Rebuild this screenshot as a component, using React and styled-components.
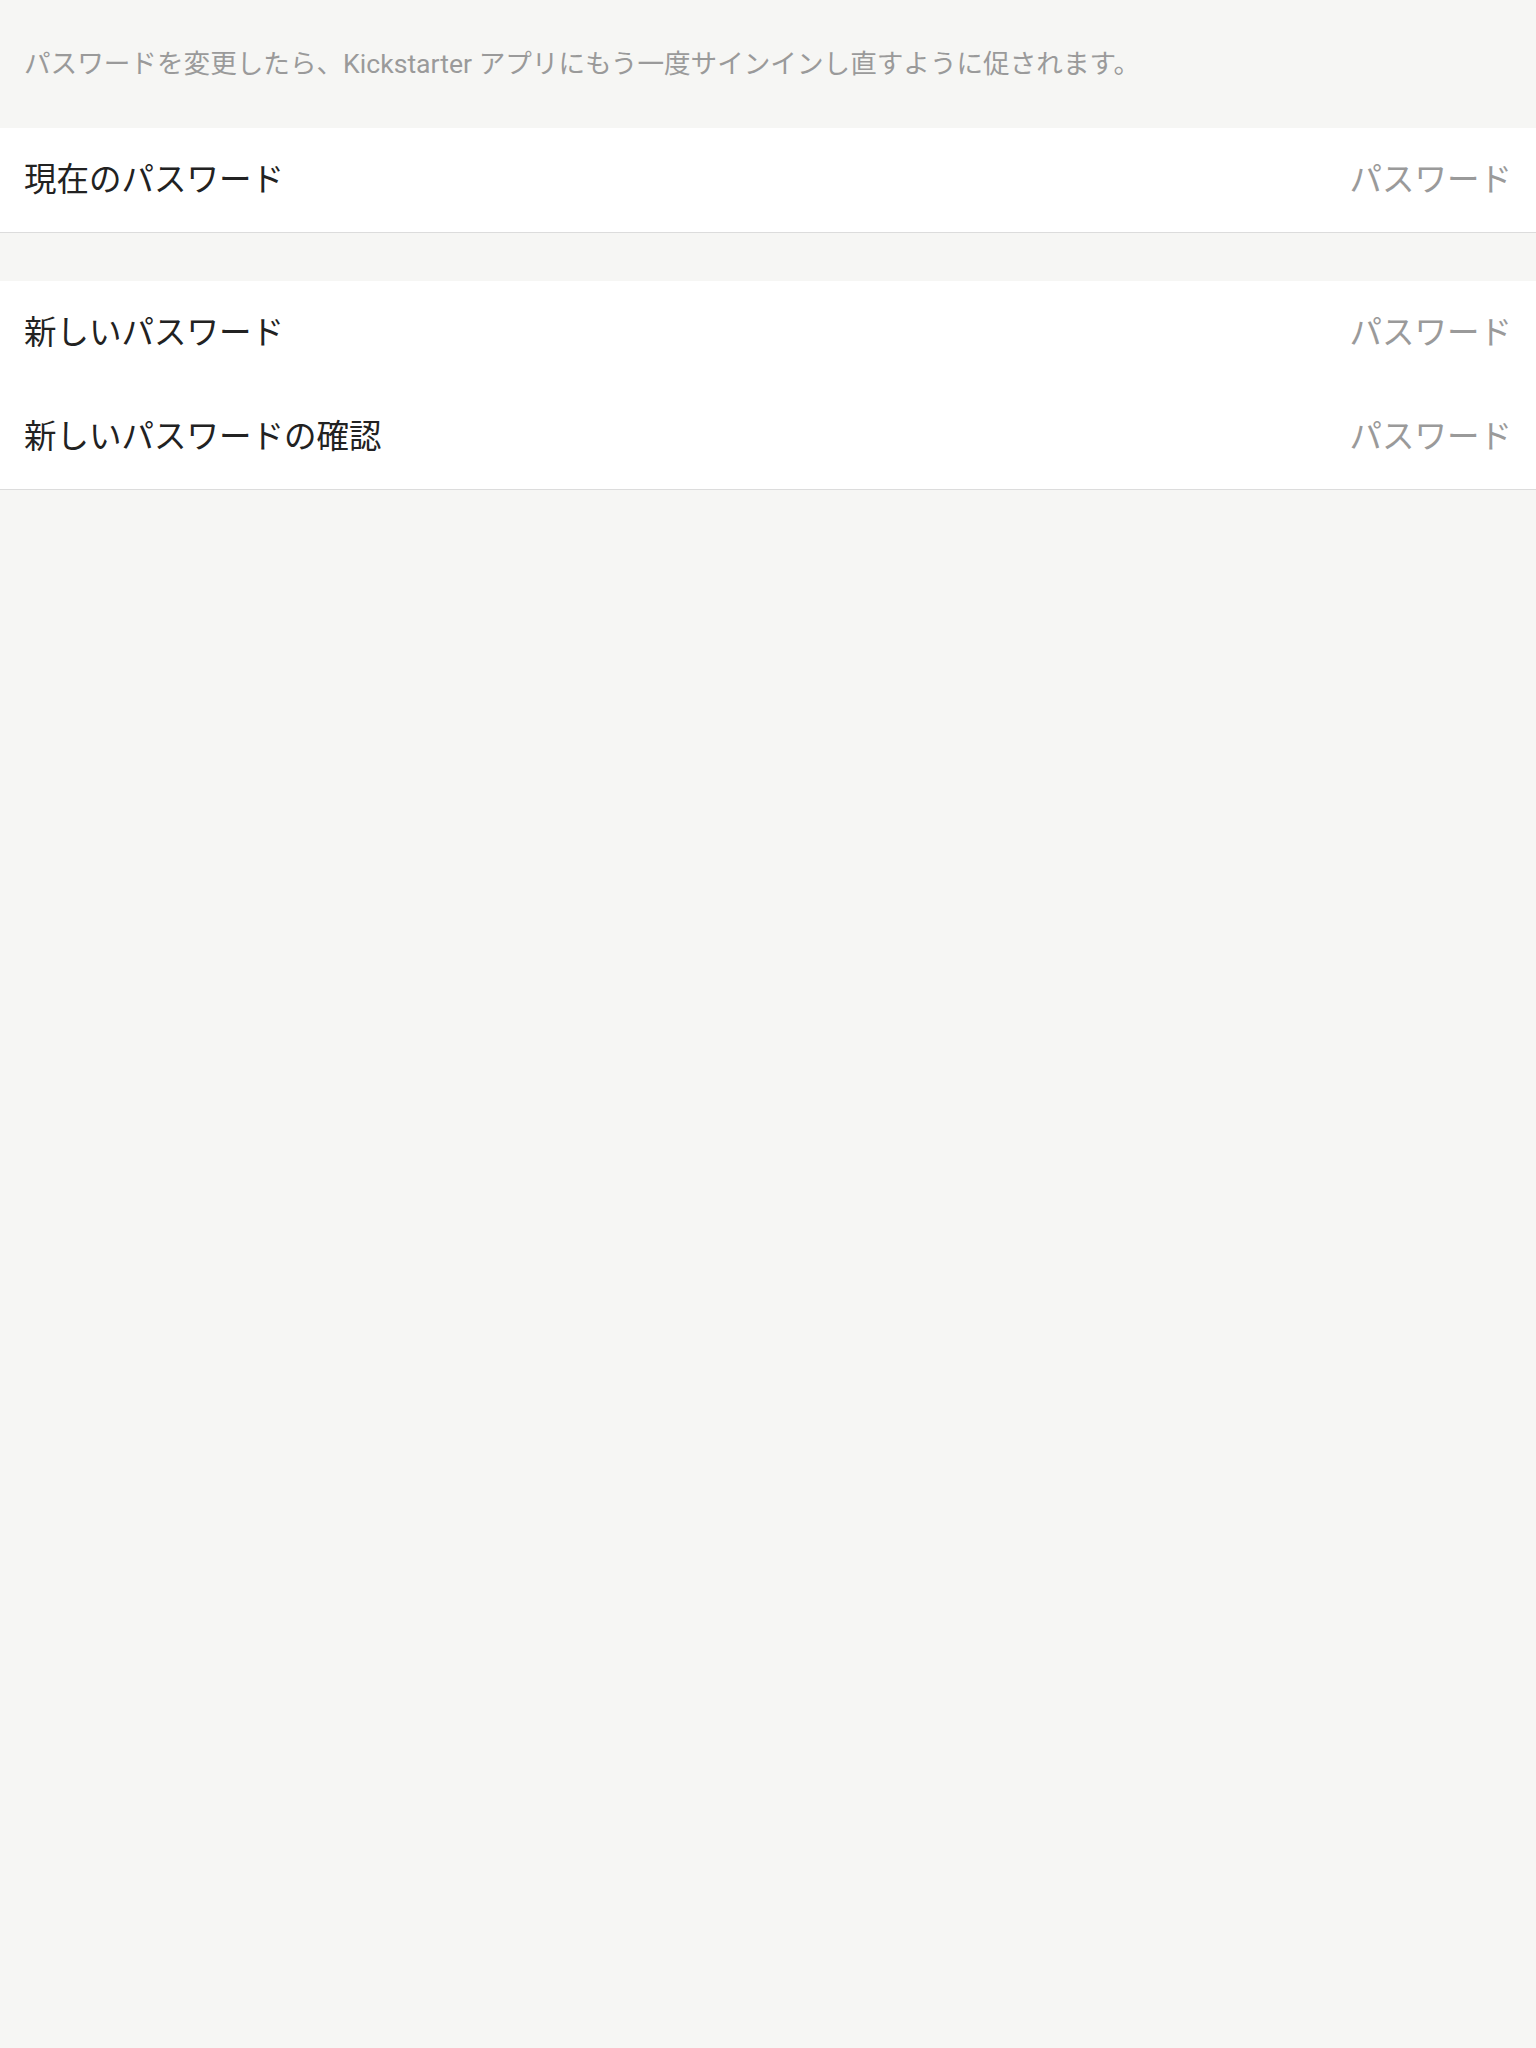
import React from "react";
import styled, {createGlobalStyle} from "styled-components";

const GlobalStyle = createGlobalStyle`
  html, body {
    margin: 0;
    padding: 0;
    background: #f6f6f4;
  }
  body {
    font-family: Roboto, "Noto Sans CJK JP", sans-serif;
  }
`;

const groups = [
  ["現在のパスワード"],
  ["新しいパスワード", "新しいパスワードの確認"],
];

const App = () => {
  return (
    <Page>
      <GlobalStyle />
      <Notice>
        パスワードを変更したら、Kickstarter アプリにもう一度サインインし直すように促されます。
      </Notice>
      <Groups>
        {groups.map((rows, i) => (
          <Group key={i}>
            {rows.map(label => (
              <Row key={label}>
                <Label>{label}</Label>
                <Field type="password" placeholder="パスワード" />
              </Row>
            ))}
          </Group>
        ))}
      </Groups>
    </Page>
  );
};

const Page = styled.div`
  min-height: 2048px;
  background: #f6f6f4;
`;

const Notice = styled.div`
  height: 128px;
  box-sizing: border-box;
  display: flex;
  align-items: center;
  padding: 0 24px;
  font-size: 26.6px;
  line-height: 36px;
  color: #9a9a9a;
  white-space: nowrap;
`;

const Groups = styled.div`
  display: flex;
  flex-direction: column;
  gap: 48px;
`;

const Group = styled.div`
  background: #ffffff;
  border-bottom: 1px solid #dcdcdc;
`;

const Row = styled.label`
  height: 104px;
  display: flex;
  align-items: center;
  justify-content: space-between;
  padding: 0 24px;
`;

const Label = styled.span`
  display: block;
  font-size: 32.5px;
  line-height: 40px;
  margin-bottom: 1px;
  color: #222222;
  white-space: nowrap;
`;

const Field = styled.input`
  border: none;
  outline: none;
  background: transparent;
  text-align: right;
  font-family: inherit;
  font-size: 32.5px;
  line-height: 40px;
  height: 40px;
  color: #222222;
  width: 400px;
  padding: 0;

  &::placeholder {
    color: #9a9a9a;
  }
`;

export default App;
